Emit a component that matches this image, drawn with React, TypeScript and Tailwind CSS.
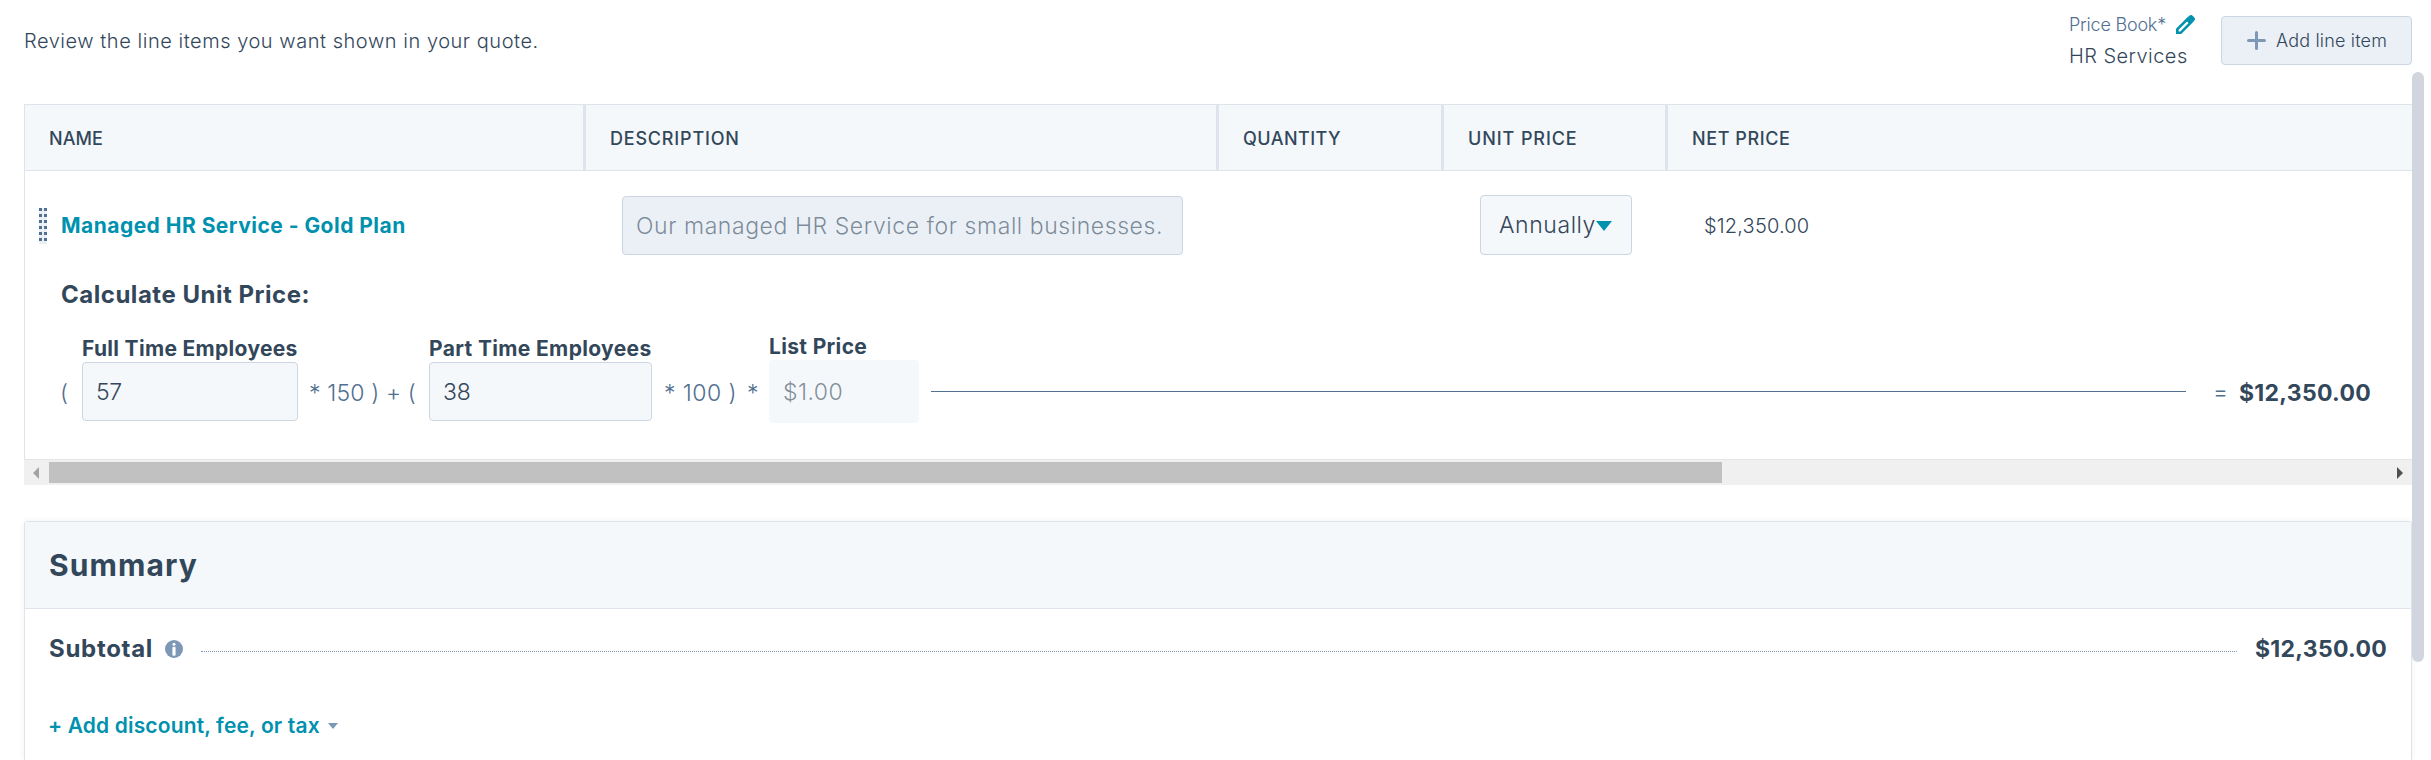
import React from 'react';

interface HeaderCellProps {
  label: string;
  width: string;
  tracking: string;
}

const columns: HeaderCellProps[] = [
  { label: 'NAME', width: 'w-[561px] pl-6 border-r-3', tracking: 'tracking-[0.1px]' },
  { label: 'DESCRIPTION', width: 'w-[633px] pl-6 border-r-3', tracking: 'tracking-[0.8px]' },
  { label: 'QUANTITY', width: 'w-[225px] pl-6 border-r-3', tracking: 'tracking-[0.45px]' },
  { label: 'UNIT PRICE', width: 'w-[224px] pl-6 border-r-3', tracking: 'tracking-[0.9px]' },
  { label: 'NET PRICE', width: 'flex-1 pl-6', tracking: 'tracking-[0.58px]' },
];

const HeaderCell: React.FC<HeaderCellProps> = ({ label, width, tracking }) => (
  <div className={`flex items-center border-[#dfe3eb] pt-px text-[18px] font-medium ${width} ${tracking}`}>{label}</div>
);

interface FieldProps {
  label: string;
  value: string;
  width: string;
  tracking: string;
}

const Field: React.FC<FieldProps> = ({ label, value, width, tracking }) => (
  <div className={`mb-[2px] ${width}`}>
    <div className={`mb-px h-6 text-[21px] leading-6 font-bold ${tracking}`}>{label}</div>
    <div className="flex h-[59px] items-center rounded-[4px] border border-[#cbd6e2] bg-[#f5f8fa] pt-0.5 pl-[13px] text-[23px] font-light tracking-[-0.3px]">
      {value}
    </div>
  </div>
);

const PencilIcon: React.FC = () => (
  <svg className="size-[19px]" viewBox="0 0 19 19" fill="none">
    <path d="M0 19v-5.2L12 1.8 17.2 7 5.2 19Z" fill="#0091ae" />
    <path d="M11.8 2 13.4.7a2.4 2.4 0 0 1 3.2 0l1.7 1.7a2.4 2.4 0 0 1 0 3.2L17 7.2Z" fill="#0091ae" />
    <path d="M2.6 16.4v-1.7L10.9 6.4l1.7 1.7L4.3 16.4Z" fill="#fff" />
  </svg>
);

const InfoIcon: React.FC = () => (
  <svg className="size-[18px]" viewBox="0 0 18 18">
    <circle cx="9" cy="9" r="9" fill="#7c98b6" />
    <circle cx="9" cy="4.2" r="1.5" fill="#fff" />
    <rect x="7.4" y="6.8" width="3.2" height="9" rx="1.2" fill="#fff" />
  </svg>
);

const DragHandle: React.FC = () => (
  <svg className="h-9 w-2" viewBox="0 0 8 36">
    <rect width="8" height="36" fill="#eaf0f6" />
    {[0, 6, 12, 18, 24, 30].map((y) => (
      <g key={y} fill="#516f90">
        <rect x="0" y={y} width="3" height="3" />
        <rect x="5" y={y} width="3" height="3" />
      </g>
    ))}
  </svg>
);

const Toolbar: React.FC = () => (
  <div className="flex h-[104px] items-start pl-6">
    <p className="mt-[26px] flex-1 text-[20px] leading-[30px] font-light tracking-[0.54px]">
      Review the line items you want shown in your quote.
    </p>
    <div className="w-[151px]">
      <div className="mt-3 flex h-6 items-center">
        <span className="-ml-px w-[107px] text-[18px] font-light tracking-[-0.21px] text-[#516f90]">Price Book*</span>
        <PencilIcon />
      </div>
      <div className="mt-[6px] -ml-px text-[20px] leading-7 font-light tracking-[0.45px]">HR Services</div>
    </div>
    <button className="mt-4 flex h-[49px] w-[191px] items-center rounded-[4px] border border-[#cbd6e2] bg-[#eaf0f6] pl-[25px] text-[18px] font-light tracking-[0.17px]">
      <svg className="mr-[10px] size-[19px]" viewBox="0 0 19 19" stroke="#7c98b6" strokeWidth="3" strokeLinecap="round">
        <path d="M9.5 1.5v16M1.5 9.5h16" />
      </svg>
      Add line item
    </button>
  </div>
);

const LineItem: React.FC = () => (
  <div className="h-[288px]">
    <div className="flex h-[84px] items-end">
      <div className="flex h-[59px] w-[597px] items-center pl-[14px]">
        <DragHandle />
        <a className="ml-[14px] text-[21px] font-bold tracking-[0.47px] text-[#0091ae]">
          Managed HR Service - Gold Plan
        </a>
      </div>
      <div className="flex h-[59px] w-[561px] items-center rounded-[4px] border border-[#cbd6e2] bg-[#eaf0f6] pt-px pl-[13px] text-[23px] font-light tracking-[0.57px] text-[#33475b]/60">
        Our managed HR Service for small businesses.
      </div>
      <div className="ml-[297px] flex h-[60px] w-[152px] items-center rounded-[4px] border border-[#cbd6e2] bg-[#f5f8fa] pl-[18px]">
        <span className="w-[97px] pt-px text-[23px] font-light tracking-[0.58px]">Annually</span>
        <svg className="mt-px h-[10px] w-4" viewBox="0 0 16 10">
          <path d="M0 0h16L8 10Z" fill="#0091ae" />
        </svg>
      </div>
      <div className="ml-[72px] flex h-[59px] items-center text-[20px] font-light tracking-[0.18px]">$12,350.00</div>
    </div>

    <div className="pl-9">
      <h3 className="mt-[23px] text-[24px] leading-[34px] font-bold tracking-[0.52px]">Calculate Unit Price:</h3>
      <div className="mt-[23px] ml-px flex items-end text-[23px] font-light whitespace-nowrap text-[#516f90]">
        <span className="-ml-0.5 flex h-[61px] w-[22px] items-center pt-0.5">(</span>
        <div className="flex items-end text-[#33475b]">
          <Field label="Full Time Employees" value="57" width="w-[216px]" tracking="tracking-[0.31px]" />
        </div>
        <span className="flex h-[61px] w-[131px] items-center pt-0.5 pl-[11px] tracking-[0.15px]">* 150 ) + (</span>
        <div className="flex items-end text-[#33475b]">
          <Field label="Part Time Employees" value="38" width="w-[223px]" tracking="tracking-[0.35px]" />
        </div>
        <span className="flex h-[61px] w-[95px] items-center pt-0.5 pl-3 tracking-[0.44px]">* 100 )</span>
        <span className="flex h-[61px] w-[22px] items-center pt-0.5">*</span>
        <div className="w-[150px] text-[#33475b]">
          <div className="mb-px h-6 text-[21px] leading-6 font-bold tracking-[0.33px]">List Price</div>
          <div className="flex h-[63px] items-center rounded-[4px] bg-[#f5f8fa] pt-0.5 pl-[14px] tracking-[0.42px] text-[#33475b]/60">
            $1.00
          </div>
        </div>
        <div className="mb-[31px] ml-3 h-px w-[1255px] bg-[#516f90]" />
        <span className="ml-[27px] flex h-[61px] w-[26px] items-center">=</span>
        <span className="flex h-[61px] items-center pt-0.5 font-bold tracking-[0.3px] text-[#33475b]">$12,350.00</span>
      </div>
    </div>
  </div>
);

const HorizontalScrollbar: React.FC = () => (
  <div className="flex h-[26px] items-center border-t border-[#e5e5e5] bg-[#f0f0f0]">
    <svg className="ml-[9px] h-3 w-[6px]" viewBox="0 0 6 12">
      <path d="M6 0v12L0 6Z" fill="#a3a3a3" />
    </svg>
    <div className="ml-[10px] h-[21px] w-[1673px] bg-[#c1c1c1]" />
    <svg className="mr-[9px] ml-auto h-3 w-[6px]" viewBox="0 0 6 12">
      <path d="M0 0v12L6 6Z" fill="#505050" />
    </svg>
  </div>
);

const Summary: React.FC = () => (
  <section className="mt-9 ml-6 h-[239px] rounded-t-[3px] border border-b-0 border-[#dfe3eb] shadow-[0_0_6px_rgba(0,0,0,0.06)]">
    <div className="flex h-[87px] items-center border-b border-[#dfe3eb] bg-[#f5f8fa] pl-6">
      <h2 className="text-[30px] font-bold tracking-[1.1px]">Summary</h2>
    </div>
    <div className="flex h-[80px] items-center px-6">
      <span className="w-[116px] text-[24px] font-bold tracking-[0.7px]">Subtotal</span>
      <InfoIcon />
      <div className="mt-[5px] ml-[18px] w-[2036px] border-t border-dotted border-[#7c98b6]" />
      <span className="ml-[18px] text-[23px] font-bold tracking-[0.3px]">$12,350.00</span>
    </div>
    <div className="mt-[19px] flex h-9 items-center pl-[23px] text-[21px] font-semibold text-[#0091ae]">
      <span className="w-[280px] tracking-[0.15px]">+ Add discount, fee, or tax</span>
      <svg className="h-[6px] w-[10px]" viewBox="0 0 10 6">
        <path d="M0 0h10L5 6Z" fill="#7c98b6" />
      </svg>
    </div>
  </section>
);

const App: React.FC = () => {
  return (
    <div className="flex h-[760px] w-[2431px] overflow-hidden bg-white font-['Inter','Liberation_Sans',sans-serif] text-[#33475b]">
      <main className="w-[2412px]">
        <Toolbar />
        <div className="ml-6">
          <div className="border-t border-l border-[#dfe3eb]">
            <div className="flex h-[66px] border-b border-[#dfe3eb] bg-[#f5f8fa]">
              {columns.map((column) => (
                <HeaderCell key={column.label} {...column} />
              ))}
            </div>
            <LineItem />
          </div>
          <HorizontalScrollbar />
        </div>
        <Summary />
      </main>
      <div className="mt-[72px] h-[590px] w-3 rounded-full bg-[#d1d5de]" />
    </div>
  );
};

export default App;
